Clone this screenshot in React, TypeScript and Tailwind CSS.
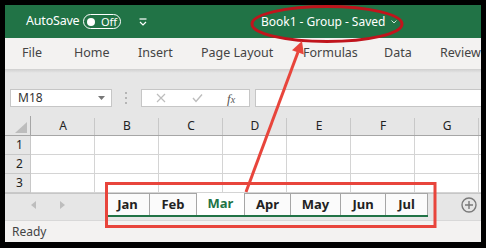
import React from 'react';

const ribbonTabs = [
  { label: 'File', w: 'w-[52px]' },
  { label: 'Home', w: 'w-[64px]' },
  { label: 'Insert', w: 'w-[63px]' },
  { label: 'Page Layout', w: 'w-[102px]' },
  { label: 'Formulas', w: 'w-[81px]' },
  { label: 'Data', w: 'w-[56px]' },
  { label: 'Review', w: 'w-[60px]' },
];

const columns = ['A', 'B', 'C', 'D', 'E', 'F', 'G'];

const sheets = [
  { name: 'Jan', w: 'w-[44px]' },
  { name: 'Feb', w: 'w-[47px]' },
  { name: 'Mar', w: 'w-[48px]', active: true },
  { name: 'Apr', w: 'w-[46px]' },
  { name: 'May', w: 'w-[50px]' },
  { name: 'Jun', w: 'w-[45px]' },
  { name: 'Jul', w: 'w-[42px]' },
];

const TitleBar: React.FC = () => (
  <div className="h-[33px] shrink-0 bg-[#217346] flex items-center text-white text-[12.5px] whitespace-nowrap">
    <span className="ml-[21px] w-[57px] shrink-0 tracking-[-0.2px]">AutoSave</span>
    <div className="w-[38px] h-[15px] shrink-0 rounded-full border border-white flex items-center pl-[3px]">
      <span className="w-[8px] h-[8px] rounded-full bg-white" />
      <span className="ml-[6px] text-[11px] leading-none">Off</span>
    </div>
    <svg className="ml-[17px] shrink-0" width="10" height="10" viewBox="0 0 10 10">
      <line x1="1.5" y1="2" x2="8.5" y2="2" stroke="white" strokeWidth="1.2" />
      <polyline points="2,5 5,8 8,5" fill="none" stroke="white" strokeWidth="1.2" />
    </svg>
    <span className="ml-[113px] flex items-center text-[12px]">
      Book1<span className="mx-[3px]">-</span>Group<span className="mx-[3px]">-</span>Saved
    </span>
    <svg className="ml-[6px]" width="6" height="4" viewBox="0 0 6 4">
      <polyline points="0.5,0.5 3,3 5.5,0.5" fill="none" stroke="#cfe3d6" strokeWidth="1" />
    </svg>
  </div>
);

const Ribbon: React.FC = () => (
  <div className="h-[31px] shrink-0 bg-[#f3f2f1] flex items-center pl-[17px] text-[12.5px] text-[#444] whitespace-nowrap">
    {ribbonTabs.map((t) => (
      <span key={t.label} className={`${t.w} shrink-0`}>{t.label}</span>
    ))}
  </div>
);

const FormulaBar: React.FC = () => (
  <div className="h-[47px] shrink-0 flex flex-col">
    <div className="h-[4px] bg-gradient-to-b from-[#cfcfcf] to-[#e6e6e6]" />
    <div className="mt-[16px] h-[18px] flex pl-[5px]">
      <div className="w-[102px] bg-white border border-[#c6c6c6] flex items-center pl-[7px] pr-[6px] text-[12px] text-[#333]">
        <span>M18</span>
        <svg className="ml-auto" width="7" height="4" viewBox="0 0 7 4">
          <polygon points="0,0 7,0 3.5,4" fill="#777" />
        </svg>
      </div>
      <div className="ml-[13px] w-[2px] flex flex-col justify-center gap-[3px]">
        <span className="w-[2px] h-[2px] bg-[#b5b5b5]" />
        <span className="w-[2px] h-[2px] bg-[#b5b5b5]" />
        <span className="w-[2px] h-[2px] bg-[#b5b5b5]" />
      </div>
      <div className="ml-[14px] w-[109px] bg-white border border-[#c6c6c6] flex items-center">
        <svg className="ml-[14px]" width="10" height="10" viewBox="0 0 10 10">
          <path d="M1 1 L9 9 M9 1 L1 9" stroke="#bdbdbd" strokeWidth="1.2" />
        </svg>
        <svg className="ml-[26px]" width="11" height="10" viewBox="0 0 11 10">
          <polyline points="1,5 4,8.5 10,1.5" fill="none" stroke="#bdbdbd" strokeWidth="1.4" />
        </svg>
        <span className="ml-[24px] font-['Liberation_Serif',serif] italic text-[13px] text-[#555] leading-none">
          f<span className="text-[10px]">x</span>
        </span>
      </div>
      <div className="ml-[5px] flex-1 bg-white border border-[#c6c6c6] border-r-0" />
    </div>
  </div>
);

const Grid: React.FC = () => (
  <div className="shrink-0 grid grid-cols-[26px_repeat(7,64px)_1fr] grid-rows-[20px_19px_19px_19px] bg-white">
    <div className="relative bg-[#e6e6e6] border-r border-b border-[#a6a6a6]">
      <svg className="absolute left-[10px] top-[6px]" width="12" height="11" viewBox="0 0 12 11">
        <polygon points="12,0 12,11 0,11" fill="#bdbdbd" />
      </svg>
    </div>
    {columns.map((c) => (
      <div key={c} className="bg-[#e6e6e6] border-b border-[#a6a6a6] relative flex items-center justify-center text-[12px] text-[#222]">
        {c}
        <span className="absolute right-0 top-[2px] bottom-0 w-px bg-[#c8c8c8]" />
      </div>
    ))}
    <div className="bg-[#e6e6e6] border-b border-[#a6a6a6]" />
    {[1, 2, 3].map((r) => (
      <React.Fragment key={r}>
        <div className="bg-[#e6e6e6] border-r border-b border-[#c8c8c8] flex items-center pl-[11px] text-[12px] text-[#222]">
          {r}
        </div>
        {columns.map((c) => (
          <div key={c} className="border-r border-b border-[#d4d4d4]" />
        ))}
        <div className="border-b border-[#d4d4d4]" />
      </React.Fragment>
    ))}
  </div>
);

const SheetTabs: React.FC = () => (
  <div className="h-[27px] shrink-0 bg-[#e6e6e6] flex">
    <div className="w-[101px] h-[22px] border-t border-[#c6c6c6] flex items-center">
      <svg className="ml-[26px]" width="5" height="8" viewBox="0 0 5 8">
        <polygon points="5,0 5,8 0,4" fill="#bdbdbd" />
      </svg>
      <svg className="ml-[24px]" width="5" height="8" viewBox="0 0 5 8">
        <polygon points="0,0 0,8 5,4" fill="#bdbdbd" />
      </svg>
    </div>
    <div className="flex flex-col">
      <div className="flex h-[22px]">
        {sheets.map((s) => (
          <div
            key={s.name}
            className={`${s.w} shrink-0 flex items-center justify-center text-[13px] font-bold border-r border-[#a6a6a6] ${
              s.active ? 'bg-white text-[#217346]' : 'bg-[#fbfbfb] text-[#222] border-t'
            }`}
          >
            {s.name}
          </div>
        ))}
      </div>
      <div className="h-[2px] bg-[#217346]" />
    </div>
    <div className="flex-1 h-[22px] border-t border-[#c6c6c6] flex items-center justify-end pr-[4px]">
      <svg width="16" height="16" viewBox="0 0 16 16">
        <circle cx="8" cy="8" r="7" fill="none" stroke="#7a7a7a" strokeWidth="1.4" />
        <path d="M8 4 V12 M4 8 H12" stroke="#7a7a7a" strokeWidth="1.4" />
      </svg>
    </div>
  </div>
);

const StatusBar: React.FC = () => (
  <div className="flex-1 bg-[#f3f2f1] border-t border-[#d8d8d8] flex items-center pl-[7px] text-[12px] text-[#444]">
    Ready
  </div>
);

const Annotations: React.FC = () => (
  <svg className="absolute inset-0 pointer-events-none" width="486" height="248" viewBox="0 0 486 248">
    <ellipse cx="327" cy="24" rx="75" ry="17.5" fill="none" stroke="#c0141c" strokeWidth="3" />
    <rect x="106.5" y="183.5" width="328.5" height="43" fill="none" stroke="#e8453c" strokeWidth="3" />
    <line x1="246" y1="192" x2="298" y2="52" stroke="#e8453c" strokeWidth="3" />
    <polygon points="302,41 303.8,54.6 292,50.2" fill="#e8453c" />
  </svg>
);

const App: React.FC = () => {
  return (
    <div className="relative w-[486px] h-[248px] bg-black pt-[5px] pl-[5px] font-['Noto_Sans',sans-serif]">
      <div className="w-[476px] h-[237px] overflow-hidden flex flex-col bg-[#e6e6e6]">
        <TitleBar />
        <Ribbon />
        <FormulaBar />
        <Grid />
        <SheetTabs />
        <StatusBar />
      </div>
      <Annotations />
    </div>
  );
};

export default App;
